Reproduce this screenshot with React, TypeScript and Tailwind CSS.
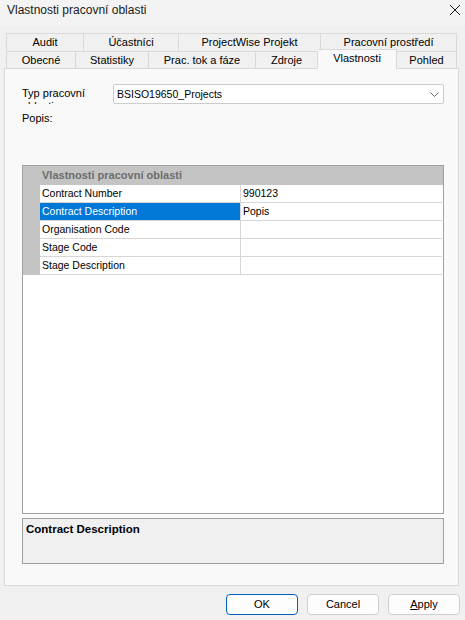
import React from 'react';

const topTabs = [
  { label: 'Audit', w: 'w-[78px]' },
  { label: 'Účastníci', w: 'w-[95px]' },
  { label: 'ProjectWise Projekt', w: 'w-[142px]' },
  { label: 'Pracovní prostředí', w: 'w-[136px]' },
];

const bottomTabs = [
  { label: 'Obecné', w: 'w-[70px]' },
  { label: 'Statistiky', w: 'w-[73px]' },
  { label: 'Prac. tok a fáze', w: 'w-[107px]' },
  { label: 'Zdroje', w: 'w-[62px]' },
  { label: 'Vlastnosti', w: 'w-[79px]', active: true },
  { label: 'Pohled', w: 'w-[60px]' },
];

const rows = [
  { name: 'Contract Number', value: '990123' },
  { name: 'Contract Description', value: 'Popis', selected: true },
  { name: 'Organisation Code', value: '' },
  { name: 'Stage Code', value: '' },
  { name: 'Stage Description', value: '' },
];

function CloseIcon() {
  return (
    <svg width="12" height="12" viewBox="0 0 12 12" fill="none" stroke="#1a1a1a" strokeWidth="1">
      <path d="M1 1L11 11M11 1L1 11" />
    </svg>
  );
}

function Chevron() {
  return (
    <svg width="9" height="5" viewBox="0 0 9 5" fill="none" stroke="#5f5f5f" strokeWidth="1">
      <path d="M0.5 0.5L4.5 4.5L8.5 0.5" />
    </svg>
  );
}

export default function App() {
  return (
    <div
      className="w-[465px] h-[620px] bg-[#f0f0f0] flex flex-col text-[#000] overflow-hidden"
      style={{ fontFamily: '"Liberation Sans", Arial, sans-serif' }}
    >
      {/* title bar */}
      <div className="h-[26px] bg-[#f3f3f3] flex items-start justify-between pl-[7px] pr-[4px] pt-[3px]">
        <span className="text-[12px] leading-[14px] text-[#1a1a1a]">Vlastnosti pracovní oblasti</span>
        <div className="pt-[1px]">
          <CloseIcon />
        </div>
      </div>

      {/* tabs */}
      <div className="mt-[7px] ml-[6px] w-[451px] flex flex-col text-[11px] leading-[13px]">
        <div className="flex h-[18px]">
          {topTabs.map((t, i) => (
            <div
              key={t.label}
              className={`${t.w} border-t border-r border-[#d9d9d9] ${i === 0 ? 'border-l' : ''} flex items-center justify-center`}
            >
              {t.label}
            </div>
          ))}
        </div>
        <div className="flex h-[17px] items-end">
          {bottomTabs.map((t, i) =>
            t.active ? (
              <div
                key={t.label}
                className={`${t.w} h-[20px] translate-y-[1px] relative z-10 bg-[#f9f9f9] border-t border-r border-[#d9d9d9] flex items-start justify-center pt-[2px]`}
              >
                {t.label}
              </div>
            ) : (
              <div
                key={t.label}
                className={`${t.w} h-[17px] border-t border-r border-[#d9d9d9] ${i === 0 ? 'border-l' : ''} flex items-center justify-center`}
              >
                {t.label}
              </div>
            )
          )}
        </div>
      </div>

      {/* panel */}
      <div className="ml-[4px] w-[455px] h-[518px] bg-[#f9f9f9] border border-[#d9d9d9] flex flex-col pl-[17px] pt-[15px]">
        <div className="flex items-start">
          <div className="w-[91px] h-[17px] mt-[3px] overflow-hidden text-[11px] leading-[13px]">
            Typ pracovní oblasti:
          </div>
          <div className="w-[331px] h-[20px] bg-white border border-[#cccccc] rounded-[2px] flex items-center justify-between pl-[3px] pr-[4px]">
            <span className="text-[10.5px] leading-[13px]">BSISO19650_Projects</span>
            <Chevron />
          </div>
        </div>
        <div className="mt-[8px] text-[11px] leading-[13px]">Popis:</div>

        {/* property grid */}
        <div className="mt-[40px] w-[422px] h-[349px] border border-[#a0a0a0] bg-white flex flex-col">
          <div className="h-[19px] bg-[#c4c4c4] flex items-center pl-[19px] text-[11px] font-bold text-[#6d6d6d]">
            Vlastnosti pracovní oblasti
          </div>
          {rows.map((r) => (
            <div key={r.name} className="flex h-[18px] text-[10.5px]">
              <div className="w-[17px] bg-[#c4c4c4]" />
              <div
                className={`w-[201px] border-b border-r border-[#d6d6d6] pl-[2px] flex items-center ${
                  r.selected ? 'bg-[#0078d7] text-white' : ''
                }`}
              >
                {r.name}
              </div>
              <div className="flex-1 border-b border-[#d6d6d6] pl-[2px] flex items-center mr-[1px]">{r.value}</div>
            </div>
          ))}
        </div>

        <div className="mt-[4px] w-[422px] h-[46px] border border-[#a0a0a0] bg-[#f0f0f0] pl-[3px] pt-[3px] text-[11.5px] font-bold leading-[14px]">
          Contract Description
        </div>
      </div>

      {/* buttons */}
      <div className="mt-[8px] flex justify-end gap-[9px] pr-[5px] text-[11px]">
        <button className="w-[72px] h-[21px] rounded-[4px] bg-[#fdfdfd] border border-[#005fb8]">OK</button>
        <button className="w-[72px] h-[21px] rounded-[4px] bg-[#fdfdfd] border border-[#d0d0d0]">Cancel</button>
        <button className="w-[72px] h-[21px] rounded-[4px] bg-[#fdfdfd] border border-[#d0d0d0]">
          <span className="underline">A</span>pply
        </button>
      </div>
    </div>
  );
}
